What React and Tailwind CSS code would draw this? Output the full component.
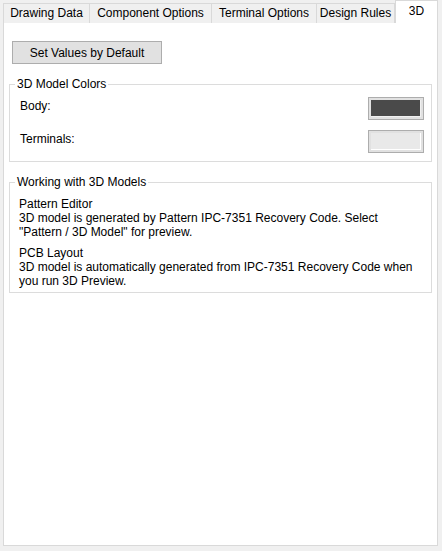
export default function App() {
  const tabs = [
    { label: "Drawing Data", w: "w-[86px]" },
    { label: "Component Options", w: "w-[122px]" },
    { label: "Terminal Options", w: "w-[105px]" },
    { label: "Design Rules", w: "w-[79px] border-r" },
  ];

  return (
    <div
      className="w-[442px] h-[551px] bg-[#f0f0f0] text-[12px] text-black pt-px overflow-hidden"
      style={{ fontFamily: '"Liberation Sans", Arial, sans-serif' }}
    >
      {/* tab strip */}
      <div className="flex items-end h-[22px] ml-[3px] relative z-10 -mb-px">
        {tabs.map((t) => (
          <div
            key={t.label}
            className={`${t.w} h-[20px] border-l border-t border-[#d9d9d9] bg-[#f0f0f0] flex items-center justify-center leading-[14px] pb-px`}
          >
            {t.label}
          </div>
        ))}
        <div className="w-[43px] h-[23px] border-l border-t border-r border-[#d9d9d9] bg-white flex items-start justify-center pt-[3px] leading-[14px]">
          3D
        </div>
      </div>

      {/* panel */}
      <div className="ml-[3px] w-[435px] h-[524px] border border-[#d9d9d9] bg-white pt-[18px] px-[5px]">
        <button className="ml-[3px] w-[150px] h-[23px] bg-[#e1e1e1] border border-[#adadad] flex items-center justify-center leading-[14px]">
          Set Values by Default
        </button>

        <fieldset className="mt-[13px] border border-[#dcdcdc] pl-[9px] pr-[7px] pt-[6px] pb-[8px]">
          <legend className="-ml-[4px] px-[2px] leading-[14px]">3D Model Colors</legend>
          <div className="flex items-center justify-between h-[23px]">
            <span className="pl-px pb-[6px]">Body:</span>
            <div className="w-[56px] h-[23px] border border-[#adadad] bg-[#e1e1e1] p-[2px]">
              <div className="w-full h-full bg-[#4a4a4a] border-r border-b border-[#f0f0f0]" />
            </div>
          </div>
          <div className="flex items-center justify-between h-[23px] mt-[10px]">
            <span className="pl-px pb-[6px]">Terminals:</span>
            <div className="w-[56px] h-[23px] border border-[#adadad] bg-[#e1e1e1] p-[2px]">
              <div className="w-full h-full bg-[#e9e9e9] border-r border-b border-white" />
            </div>
          </div>
        </fieldset>

        <fieldset className="mt-[13px] border border-[#dcdcdc] pl-[9px] pr-[4px] pt-[8px] pb-[4px] leading-[14px]">
          <legend className="-ml-[4px] px-[2px] leading-[14px]">Working with 3D Models</legend>
          <p>
            Pattern Editor
            <br />
            3D model is generated by Pattern IPC-7351 Recovery Code. Select
            <br />
            "Pattern / 3D Model" for preview.
          </p>
          <p className="mt-[7px]">
            PCB Layout
            <br />
            3D model is automatically generated from IPC-7351 Recovery Code when
            <br />
            you run 3D Preview.
          </p>
        </fieldset>
      </div>
    </div>
  );
}
